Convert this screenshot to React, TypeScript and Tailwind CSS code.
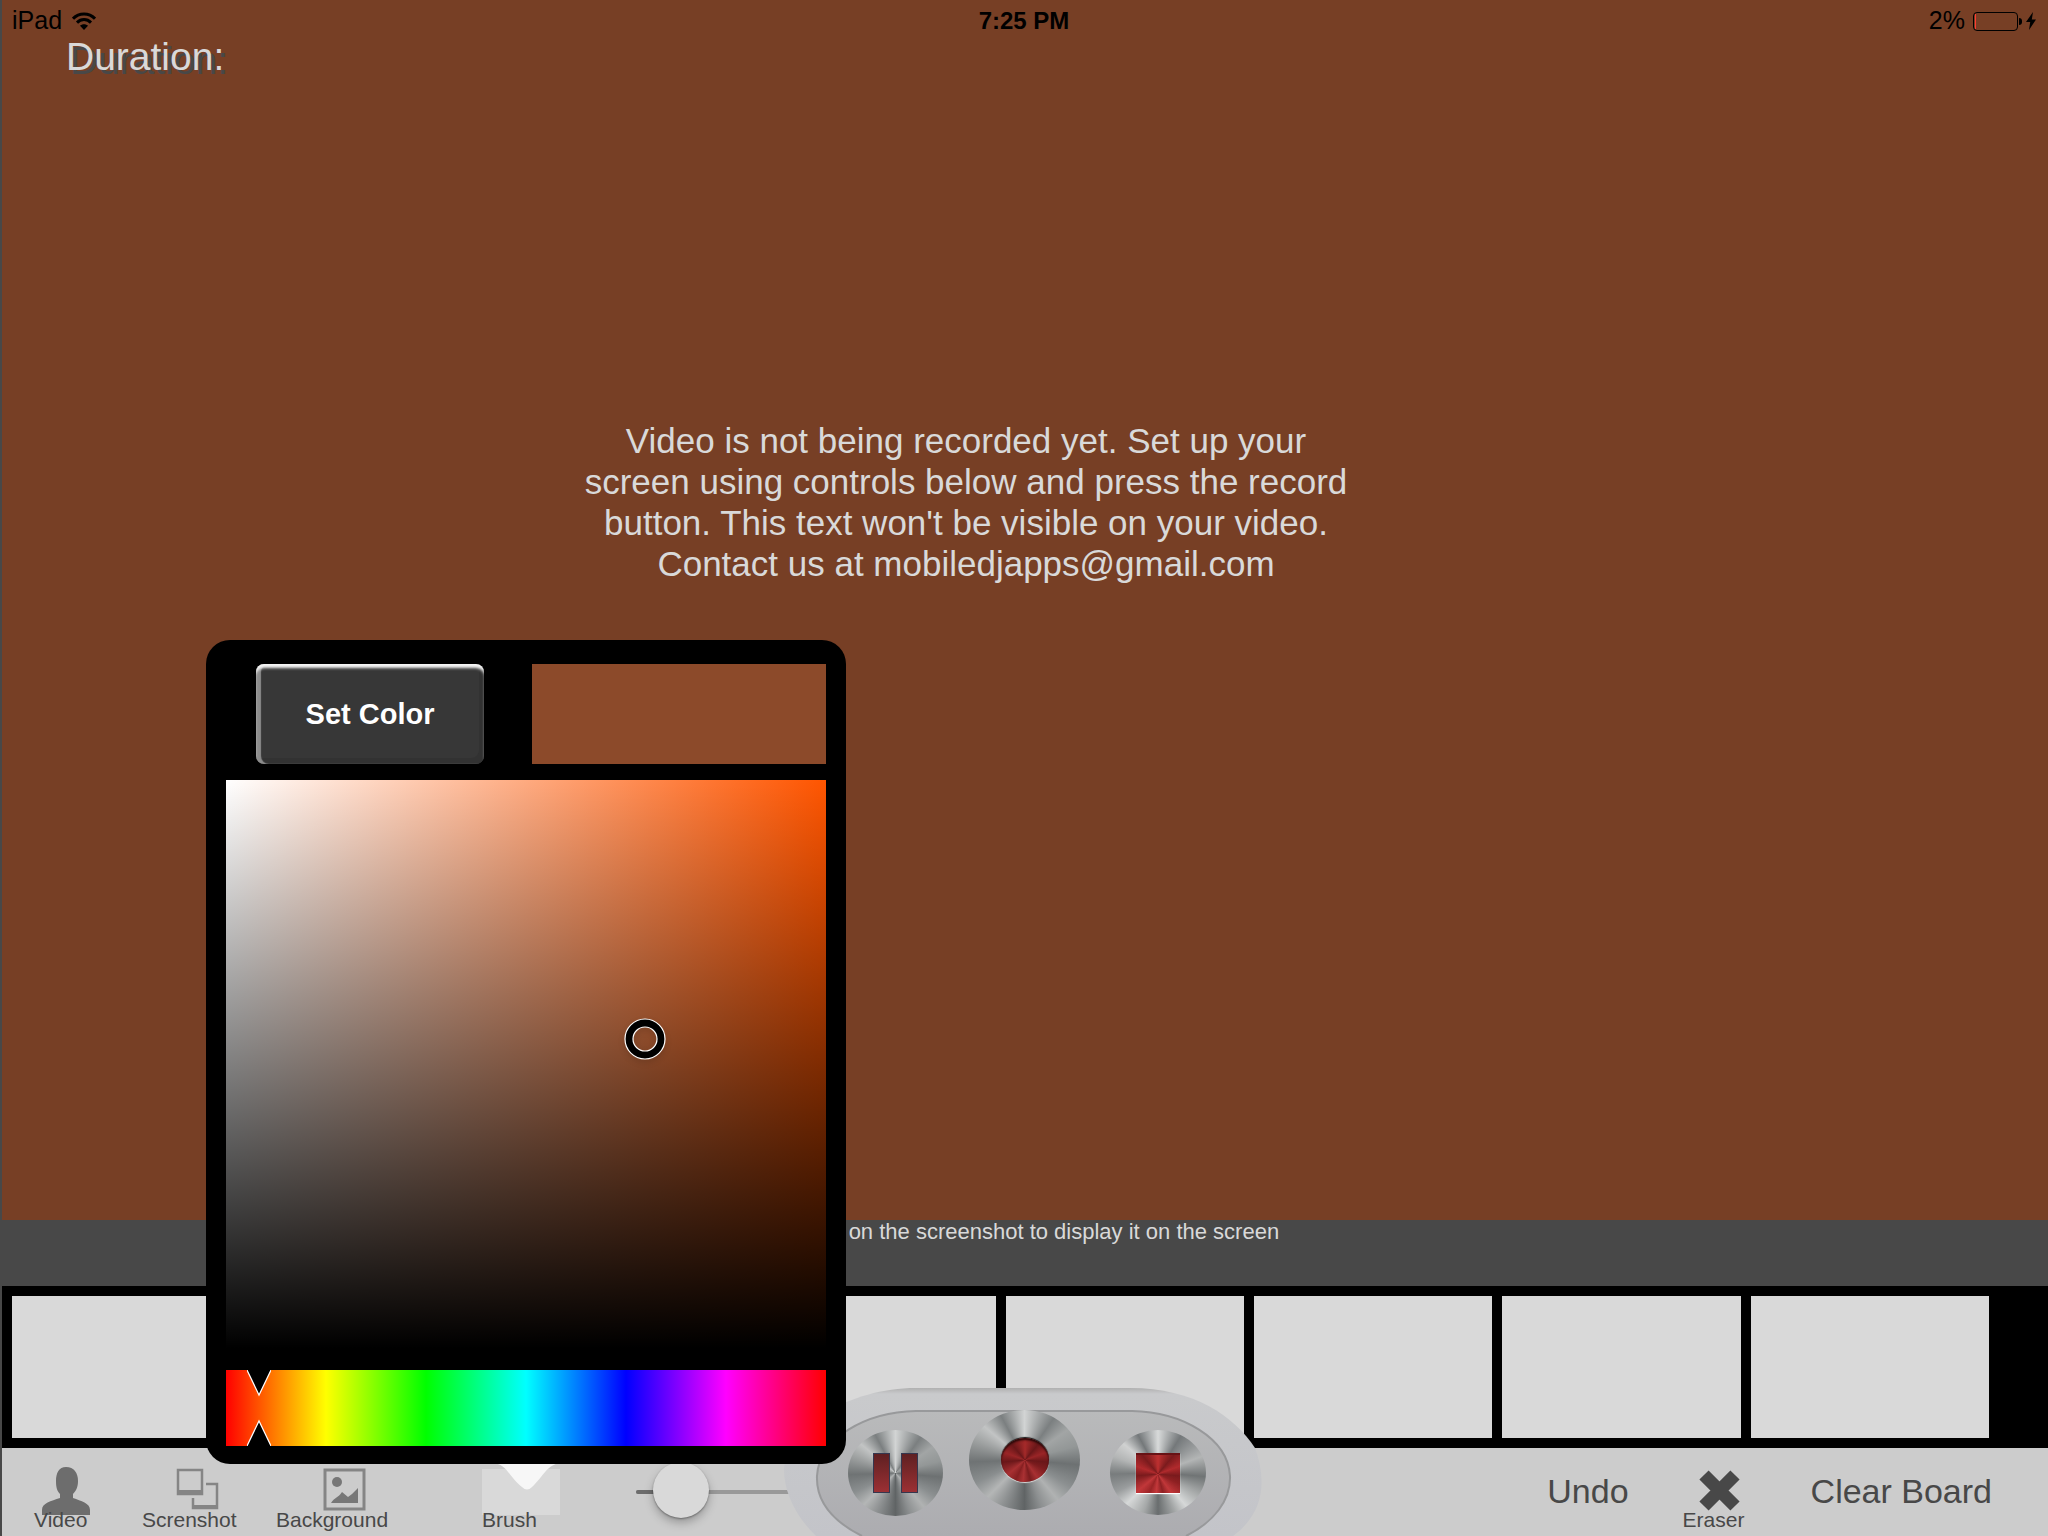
import React, { useState } from "react";

const THUMBNAILS = [1, 2, 3, 4, 5, 6, 7, 8];

function StatusBar() {
  return (
    <header className="grid h-[42px] grid-cols-3 items-center pl-[10px] pr-3 text-[25px] text-black">
      <div className="flex items-center gap-[10px]">
        <span>iPad</span>
        <svg className="h-[18px] w-6" viewBox="0 0 24 18" fill="none" stroke="currentColor" strokeWidth="3">
          <path d="M1 6.6C7 .3 17 .3 23 6.6" />
          <path d="M5 10.6c4-4 10-4 14 0" />
          <path d="M12 18l-4-4.2c2.3-2 5.700-2 8 0z" fill="currentColor" stroke="none" />
        </svg>
      </div>
      <time className="text-center text-2xl font-bold">7:25 PM</time>
      <div className="flex items-center justify-end gap-2">
        <span>2%</span>
        <div className="flex items-center gap-px">
          <div className="h-[19px] w-[45px] rounded-[4px] border border-black p-px">
            <div className="h-full w-px bg-[#ff3b30]" />
          </div>
          <div className="h-[7px] w-[3px] rounded-r-full bg-black" />
        </div>
        <svg className="-ml-1 h-[18px] w-[10px]" viewBox="0 0 10 18" fill="currentColor">
          <path d="M7 0L0 10h4.200L3 18l7-10.500H5.800z" />
        </svg>
      </div>
    </header>
  );
}

function HueMarkers() {
  return (
    <svg className="pointer-events-none absolute left-[21px] top-0 h-full w-6" viewBox="0 0 24 76">
      <path d="M0 0L12 25L24 0M0 76L12 51L24 76" fill="#000" stroke="#fff" strokeWidth="1.200" />
    </svg>
  );
}

function ColorPicker() {
  const [hue, setHue] = useState(20);
  return (
    <section className="absolute left-[206px] top-[640px] z-20 flex w-[640px] flex-col rounded-[24px] bg-black px-5 pb-[18px] pt-6">
      <div className="flex justify-between pl-[30px]">
        <button className="h-[100px] w-[228px] rounded-[8px] bg-[#373737] pt-[2px] text-[29px] font-bold text-white shadow-[inset_0_5px_3px_-1px_#f5f5f5,inset_5px_0_1px_#8c8c8c,inset_-5px_-6px_0_#323232]">
          Set Color
        </button>
        <div className="h-[100px] w-[294px] bg-[#8c4a2a]" />
      </div>
      <div className="relative mt-4 h-[580px] bg-[linear-gradient(to_top,#000_0%,#000_2%,transparent_100%),linear-gradient(to_right,#fff,#ff5500)]">
        <svg className="absolute left-[394px] top-[234px] h-[50px] w-[50px] drop-shadow-md" viewBox="0 0 50 50" fill="none">
          <circle cx="25" cy="25" r="16" stroke="#000" strokeWidth="8" />
          <circle cx="25" cy="25" r="20" stroke="#fff" strokeWidth="1.200" />
          <circle cx="25" cy="25" r="12" stroke="#fff" strokeWidth="1.200" />
        </svg>
      </div>
      <div className="relative mt-[10px] h-[76px] bg-[linear-gradient(to_right,#f00,#ff0,#0f0,#0ff,#00f,#f0f,#f00)]">
        <HueMarkers />
        <input
          type="range"
          aria-label="Hue"
          min={0}
          max={360}
          value={hue}
          onChange={(e) => setHue(Number(e.target.value))}
          className="h-full w-full cursor-pointer opacity-0"
        />
      </div>
    </section>
  );
}

function ToolButton({ label, className, children }: { label: string; className: string; children: React.ReactNode }) {
  return (
    <button className={`relative flex flex-col items-start text-left ${className}`}>
      <div className="h-[60px] w-full shrink-0">{children}</div>
      <span className="relative text-[21px] leading-6">{label}</span>
    </button>
  );
}

function BrushSlider() {
  const [size, setSize] = useState(12);
  return (
    <div className="relative ml-[76px] mt-[14px] h-14 w-[240px]">
      <div className="absolute inset-x-0 top-7 h-1 rounded-full bg-[#999]" />
      <div className="absolute left-0 top-7 h-1 w-10 rounded-full bg-[#6d6d6d]" />
      <div className="absolute left-[17px] top-0 size-14 rounded-full bg-[#d9d9d9] shadow-[0_5px_10px_rgba(0,0,0,0.25),0_1px_2px_rgba(0,0,0,0.35)]" />
      <input
        type="range"
        aria-label="Brush size"
        value={size}
        onChange={(e) => setSize(Number(e.target.value))}
        className="relative h-full w-full opacity-0"
      />
    </div>
  );
}

const STEEL =
  "bg-[conic-gradient(#d2d4d4,#7b7f80_35deg,#a2a5a5_55deg,#939797_75deg,#6d7172_95deg,#8b8f90_120deg,#b0b2b2_140deg,#8d9091_160deg,#606465_180deg,#8d9091_205deg,#b4b6b6_225deg,#8a8e8f_245deg,#6f7374_268deg,#9b9e9e_290deg,#c2c4c4_310deg,#7b7f80_332deg,#d2d4d4_360deg)]";
const STEEL_LIGHT =
  "bg-[conic-gradient(#d8dada,#74787a_32deg,#989b9c_55deg,#b3b5b5_70deg,#707475_95deg,#a0a3a3_115deg,#d6d8d8_140deg,#a0a3a3_158deg,#696d6e_180deg,#a5a8a8_200deg,#d6d8d8_225deg,#9a9d9e_245deg,#787c7d_268deg,#b3b5b5_290deg,#d0d1d1_310deg,#74787a_332deg,#d8dada_360deg)]";
const RED =
  "bg-[conic-gradient(#a52a2a,#6a1719_40deg,#9a2527_70deg,#6a1719_95deg,#7c1c1e_115deg,#a83032_145deg,#7b1c1e_165deg,#aa3133_185deg,#861f21_205deg,#a83032_230deg,#6a1719_265deg,#9a2527_290deg,#6a1719_320deg,#a52a2a_360deg)]";

function RecorderPanel() {
  return (
    <section className="absolute bottom-0 left-1/2 z-10 h-[148px] w-[480px] -translate-x-1/2">
      <svg className="absolute inset-0 h-full w-full" viewBox="0 0 480 148">
        <defs>
          <linearGradient id="shell" x1="0" y1="0" x2="0" y2="1">
            <stop offset="0" stopColor="#b0b0b0" />
            <stop offset=".04" stopColor="#c9cacc" />
            <stop offset="1" stopColor="#c3c4c9" />
          </linearGradient>
          <linearGradient id="deck" x1="0" y1="0" x2="0" y2="1">
            <stop offset="0" stopColor="#b9babb" />
            <stop offset="1" stopColor="#acacb0" />
          </linearGradient>
        </defs>
        <path d="M32 148C10 127 0 102 0 82C2 38 66 0 132 0H346C410 0 450 28 471 60C482 90 482 124 449 148z" fill="url(#shell)" />
        <path d="M78 148C46 132 32 112 33 88C35 50 82 24 132 23H348C398 24 444 50 446 88C447 112 430 134 402 148" fill="url(#deck)" stroke="#98999b" strokeWidth="2" />
      </svg>
      <button aria-label="Pause" className={`absolute left-[64px] top-[42px] flex h-[86px] w-[95px] items-center justify-center gap-[11px] rounded-[50%] ${STEEL}`}>
        <span className="h-10 w-[17px] border border-[#35374f] bg-linear-to-b from-[#5f2022] to-[#9c3034]" />
        <span className="h-10 w-[17px] border border-[#35374f] bg-linear-to-b from-[#5f2022] to-[#9c3034]" />
      </button>
      <button aria-label="Record" className={`absolute left-[185px] top-[22px] flex h-[100px] w-[111px] items-center justify-center rounded-[50%] ${STEEL}`}>
        <span className={`h-[44px] w-12 rounded-[50%] shadow-[0_-1px_1px_#111,0_1px_1px_#ddd,inset_0_2px_2px_#2a0808] ${RED}`} />
      </button>
      <button aria-label="Stop" className={`absolute left-[326px] top-[42px] flex h-[85px] w-[96px] items-center justify-center rounded-[50%] ${STEEL_LIGHT}`}>
        <span className={`h-10 w-11 border-t-2 border-t-[#5a1012] shadow-[0_1px_1px_#e5e5e5] brightness-115 ${RED}`} />
      </button>
    </section>
  );
}

function Toolbar() {
  return (
    <footer className="flex h-[88px] bg-[#ccc] text-[34px] text-[#484848]">
      <ToolButton label="Video" className="ml-8 w-14">
        <svg className="ml-2 mt-[19px] h-12 w-12" viewBox="0 0 48 48" fill="#6d6d6d">
          <path d="M24 0C32 0 36 6 36 14C36 20 34 24 31 27V31C39 34 48 36 48 43V48H0V43C0 36 9 34 18 31V27C15 24 14 20 14 14C14 6 17 0 24 0z" />
        </svg>
      </ToolButton>
      <ToolButton label="Screnshot" className="ml-[52px] w-24">
        <svg className="ml-[34px] mt-5 h-[43px] w-[43px]" viewBox="0 0 43 43" fill="none" stroke="#858585" strokeWidth="2.500">
          <path d="M2 2H26V26H2z M30 16H41V40H17V30" />
          <path d="M2 24H26M17 39H41" strokeWidth="4" />
        </svg>
      </ToolButton>
      <ToolButton label="Background" className="ml-[38px] w-28">
        <svg className="ml-[47px] mt-5 h-[43px] w-[43px]" viewBox="0 0 43 43" fill="none">
          <path d="M2 2H41V41H2z" stroke="#858585" strokeWidth="3" />
          <circle cx="14" cy="14" r="5" fill="#777" />
          <path d="M8 35C12 29 15 30 19 24L25 29L29 26L35 20V35z" fill="#777" />
        </svg>
      </ToolButton>
      <ToolButton label="Brush" className="ml-[94px] w-[78px]">
        <div className="mt-[21px] h-[46px] bg-[#d9d9d9]" />
        <svg className="absolute left-[11px] top-[14px] h-7 w-[68px]" viewBox="0 0 68 28" fill="#f7f7f7">
          <path d="M0 1H68C54 2 51 14 39 25Q34 30 29 25C15 14 14 2 0 1z" />
        </svg>
      </ToolButton>
      <BrushSlider />
      <div className="ml-auto flex pr-[56px]">
        <button className="pb-px">Undo</button>
        <ToolButton label="Eraser" className="ml-[54px] w-[60px]">
          <svg className="ml-4 mt-[22px] h-[41px] w-[41px]" viewBox="0 0 41 41" stroke="#484848" strokeWidth="13">
            <path d="M5 5L36 36M36 5L5 36" />
          </svg>
        </ToolButton>
        <button className="ml-[68px] pb-px">Clear Board</button>
      </div>
    </footer>
  );
}

export default function App() {
  return (
    <div className="relative flex min-h-screen flex-col overflow-hidden bg-[#484848] pl-[2px] font-['Liberation_Sans',Arial,sans-serif]">
      <main className="flex-1 bg-[#773f25]">
        <StatusBar />
        <h1 className="-mt-[5px] pl-16 text-[39px] leading-10 text-[#d9d9d9] [text-shadow:4px_4px_0_#484848]">Duration:</h1>
        <p className="ml-[574px] mt-[343px] w-[780px] text-center text-[35px] leading-[41px] text-[#d9d9d9]">
          Video is not being recorded yet. Set up your screen using controls below and press the record button. This text won't be visible on your video. Contact us at mobiledjapps@gmail.com
        </p>
      </main>
      <p className="h-[66px] pl-6 text-center text-[22px] leading-6 text-[#d9d9d9]">
        Click on the screenshot to display it on the screen
      </p>
      <div className="flex h-[162px] gap-[10px] bg-black py-[10px] pl-[10px] pr-[59px]">
        {THUMBNAILS.map((n) => (
          <button key={n} aria-label={`Screenshot ${n}`} className="flex-1 bg-[#d9d9d9]" />
        ))}
      </div>
      <Toolbar />
      <RecorderPanel />
      <ColorPicker />
    </div>
  );
}
